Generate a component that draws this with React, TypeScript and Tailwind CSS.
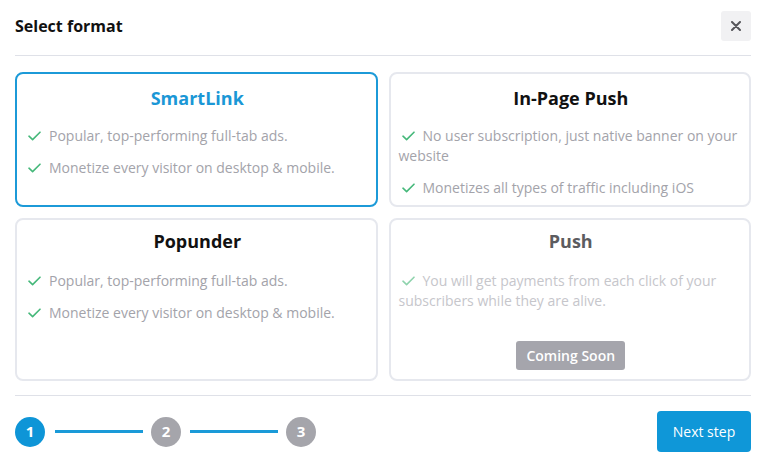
import React from "react";

const Check = ({ color }: { color: string }) => (
  <svg width="13" height="10" viewBox="0 0 13 10" className="inline-block mr-[8px] ml-[3px] align-[0px]" fill="none">
    <path d="M1 5.2 L4.6 8.6 L12 1.2" stroke={color} strokeWidth="1.6" strokeLinecap="round" strokeLinejoin="round" />
  </svg>
);

type CardProps = {
  title: string;
  bullets: string[];
  selected?: boolean;
  disabled?: boolean;
  heightClass: string;
  topClass: string;
  gapClass: string;
};

const Card = ({ title, bullets, selected, disabled, heightClass, topClass, gapClass }: CardProps) => (
  <div
    className={`${heightClass} ${topClass} rounded-[8px] flex flex-col pl-[8px] pr-[6px] pb-[9px] ${
      selected ? "border-2 border-[#1c9ad8]" : "border-2 border-[#e6e8ee]"
    }`}
  >
    <div
      className={`text-center text-[18px] font-bold leading-[26px] ${
        selected ? "text-[#1b97d6]" : disabled ? "text-[#5c5c60]" : "text-[#111111]"
      }`}
    >
      {title}
    </div>
    <div className={`${gapClass} flex flex-col gap-[12px]`}>
      {bullets.map((b) => (
        <div
          key={b}
          className={`text-[14px] leading-[20px] ${disabled ? "text-[#c6c6cb]" : "text-[#a3a3aa]"}`}
        >
          <Check color={disabled ? "#8fd3ad" : "#45b87a"} />
          {b}
        </div>
      ))}
    </div>
    {disabled && (
      <div className="mt-auto flex justify-center">
        <span className="bg-[#a5a5ac] text-white text-[14px] font-semibold leading-[20px] px-[10px] pt-[5px] pb-[4px] rounded-[3px]">
          Coming Soon
        </span>
      </div>
    )}
  </div>
);

const StepCircle = ({ n, active }: { n: number; active?: boolean }) => (
  <div
    className={`w-[30px] h-[30px] rounded-full flex items-center justify-center text-white text-[15px] font-bold ${
      active ? "bg-[#0e95d7]" : "bg-[#a5a5ab]"
    }`}
  >
    {n}
  </div>
);

export default function App() {
  return (
    <div
      className="w-[764px] h-[462px] bg-white pl-[15px] pr-[13px] flex flex-col"
      style={{ fontFamily: '"Open Sans", "Noto Sans", sans-serif' }}
    >
      <div className="h-[56px] flex items-center justify-between border-b border-[#dfe1e8] pt-[1px]">
        <div className="text-[16px] font-bold text-[#111111] -mt-[5px]">Select format</div>
        <button className="w-[30px] h-[30px] rounded-[3px] bg-[#f1f1f3] flex items-center justify-center -mt-[4px]">
          <svg width="10" height="10" viewBox="0 0 10 10">
            <path d="M1 1 L9 9 M9 1 L1 9" stroke="#55555a" strokeWidth="2" strokeLinecap="round" />
          </svg>
        </button>
      </div>

      <div className="mt-[16px] grid grid-cols-2 gap-x-[11px] gap-y-[11px]">
        <Card
          title="SmartLink"
          selected
          heightClass="h-[135px]"
          topClass="pt-[11px]"
          gapClass="mt-[15px]"
          bullets={["Popular, top-performing full-tab ads.", "Monetize every visitor on desktop & mobile."]}
        />
        <Card
          title="In-Page Push"
          heightClass="h-[135px]"
          topClass="pt-[11px]"
          gapClass="mt-[15px]"
          bullets={["No user subscription, just native banner on your website", "Monetizes all types of traffic including iOS"]}
        />
        <Card
          title="Popunder"
          heightClass="h-[163px]"
          topClass="pt-[8px]"
          gapClass="mt-[17px]"
          bullets={["Popular, top-performing full-tab ads.", "Monetize every visitor on desktop & mobile."]}
        />
        <Card
          title="Push"
          disabled
          heightClass="h-[163px]"
          topClass="pt-[8px]"
          gapClass="mt-[17px]"
          bullets={["You will get payments from each click of your subscribers while they are alive."]}
        />
      </div>

      <div className="mt-[14px] border-t border-[#dfe1e8] flex items-center justify-between pt-[15px]">
        <div className="flex items-center">
          <StepCircle n={1} active />
          <div className="w-[88px] h-[3px] bg-[#1a9ad8] ml-[10px] mr-[8px]" />
          <StepCircle n={2} />
          <div className="w-[88px] h-[3px] bg-[#1a9ad8] ml-[9px] mr-[8px]" />
          <StepCircle n={3} />
        </div>
        <button className="w-[94px] h-[41px] rounded-[4px] bg-[#0f97d8] text-white text-[14px]">Next step</button>
      </div>
    </div>
  );
}
